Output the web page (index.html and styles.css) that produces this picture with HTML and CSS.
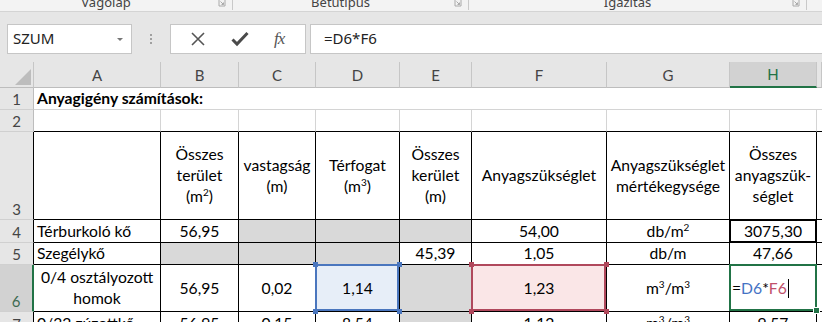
FILE: index.html
```html
<!DOCTYPE html>
<html lang="hu">
<head>
  <meta charset="UTF-8">
  <title>Anyagigény számítások</title>
  <link rel="stylesheet" href="styles.css">
</head>
<body>
  <div class="ribbon">
    <div class="group g1"><span class="glabel">Vágólap</span><span class="launch"><svg width="8" height="7" viewBox="0 0 8 7"><path d="M1 0v6h6V0" fill="none" stroke="#aaa"/><path d="M2.5 1.5l3 3M5.5 2.5v2h-2" fill="none" stroke="#aaa"/></svg></span></div>
    <div class="group g2"><span class="glabel">Betűtípus</span><span class="launch"><svg width="8" height="7" viewBox="0 0 8 7"><path d="M1 0v6h6V0" fill="none" stroke="#aaa"/><path d="M2.5 1.5l3 3M5.5 2.5v2h-2" fill="none" stroke="#aaa"/></svg></span></div>
    <div class="group g3"><span class="glabel">Igazítás</span><span class="launch"><svg width="8" height="7" viewBox="0 0 8 7"><path d="M1 0v6h6V0" fill="none" stroke="#aaa"/><path d="M2.5 1.5l3 3M5.5 2.5v2h-2" fill="none" stroke="#aaa"/></svg></span></div>
  </div>

  <div class="fbar">
    <div class="namebox">SZUM<span class="drop"></span></div>
    <div class="grip"><i></i><i></i><i></i></div>
    <div class="fbtns">
      <svg width="16" height="16" viewBox="0 0 16 16"><path d="M2 2l12 12M14 2L2 14" stroke="#555" stroke-width="1.6" fill="none"/></svg>
      <svg width="18" height="16" viewBox="0 0 18 16"><path d="M1.5 8.5l4.5 4.5L16.5 2" stroke="#4a4a4a" stroke-width="3" fill="none"/></svg>
      <span class="fx">fx</span>
    </div>
    <div class="finput">=D6*F6</div>
  </div>

  <div class="sheet">
    <!-- column headers -->
    <div class="corner"><svg width="18" height="17" viewBox="0 0 18 17"><polygon points="17,0 17,16 1,16" fill="#bdbdbd"/></svg></div>
    <div class="ch">A</div>
    <div class="ch">B</div>
    <div class="ch">C</div>
    <div class="ch">D</div>
    <div class="ch">E</div>
    <div class="ch">F</div>
    <div class="ch">G</div>
    <div class="ch sel">H</div>
    <div class="ch"></div>

    <!-- row 1 -->
    <div class="rh">1</div>
    <div class="c title">Anyagigény számítások:</div>

    <!-- row 2 -->
    <div class="rh">2</div>
    <div class="c top"></div>
    <div class="c top"></div>
    <div class="c top"></div>
    <div class="c top"></div>
    <div class="c top"></div>
    <div class="c top"></div>
    <div class="c top"></div>
    <div class="c top"></div>
    <div class="c top end"></div>

    <!-- row 3 -->
    <div class="rh tb">3</div>
    <div class="c t"></div>
    <div class="c t"><span>Összes<br>terület<br>(m<sup>2</sup>)</span></div>
    <div class="c t"><span>vastagság<br>(m)</span></div>
    <div class="c t"><span>Térfogat<br>(m<sup>3</sup>)</span></div>
    <div class="c t"><span>Összes<br>kerület<br>(m)</span></div>
    <div class="c t">Anyagszükséglet</div>
    <div class="c t"><span>Anyagszükséglet<br>mértékegysége</span></div>
    <div class="c t"><span>Összes<br>anyagszük-<br>séglet</span></div>
    <div class="c t end"></div>

    <!-- row 4 -->
    <div class="rh tb">4</div>
    <div class="c t left">Térburkoló kő</div>
    <div class="c t">56,95</div>
    <div class="c t fill"></div>
    <div class="c t fill"></div>
    <div class="c t fill"></div>
    <div class="c t">54,00</div>
    <div class="c t"><span>db/m<sup>2</sup></span></div>
    <div class="c t boxed">3075,30</div>
    <div class="c t end"></div>

    <!-- row 5 -->
    <div class="rh tb">5</div>
    <div class="c t left">Szegélykő</div>
    <div class="c t fill"></div>
    <div class="c t fill"></div>
    <div class="c t fill"></div>
    <div class="c t">45,39</div>
    <div class="c t">1,05</div>
    <div class="c t">db/m</div>
    <div class="c t">47,66</div>
    <div class="c t end"></div>

    <!-- row 6 -->
    <div class="rh tb cur">6</div>
    <div class="c t"><span>0/4 osztályozott<br>homok</span></div>
    <div class="c t">56,95</div>
    <div class="c t">0,02</div>
    <div class="c t ref blue">1,14<i class="hd tl"></i><i class="hd tr"></i><i class="hd bl"></i><i class="hd br"></i></div>
    <div class="c t fill"></div>
    <div class="c t ref red">1,23<i class="hd tl"></i><i class="hd tr"></i><i class="hd bl"></i><i class="hd br"></i></div>
    <div class="c t"><span>m<sup>3</sup>/m<sup>3</sup></span></div>
    <div class="c t active">=<span class="rb">D6</span>*<span class="rr">F6</span><span class="caret"></span><i class="hd br"></i></div>
    <div class="c t end"></div>

    <!-- row 7 -->
    <div class="rh tb">7</div>
    <div class="c t left">0/32 zúzottkő</div>
    <div class="c t">56,95</div>
    <div class="c t">0,15</div>
    <div class="c t">8,54</div>
    <div class="c t fill"></div>
    <div class="c t">1,12</div>
    <div class="c t"><span>m<sup>3</sup>/m<sup>3</sup></span></div>
    <div class="c t">9,57</div>
    <div class="c t end"></div>
  </div>
</body>
</html>
```

FILE: styles.css
```css
body {
  margin: 0;
  width: 822px;
  height: 322px;
  overflow: hidden;
  background-color: #e6e6e6;
  font-family: Lato, "Liberation Sans", sans-serif;
}

/* ribbon group labels, cut off at the top */
.ribbon {
  display: flex;
  height: 11px;
  background-color: #f3f3f3;
  border-bottom: 1px solid #d4d4d4;
  overflow: hidden;
}
.group {
  display: flex;
  height: 10px;
  border-right: 1px solid #c9c9c9;
}
.g1 { width: 232px; }
.g2 { width: 235px; }
.g3 { width: 337px; }
.glabel {
  flex: 1;
  text-align: center;
  font-family: "Noto Sans", sans-serif;
  font-size: 13px;
  line-height: 13px;
  margin-top: -4px;
  color: #444;
}
.launch {
  width: 20px;
  display: flex;
  justify-content: center;
}

/* formula bar */
.fbar {
  display: flex;
  height: 50px;
  padding-top: 12px;
  box-sizing: border-box;
  font-family: "Noto Sans", sans-serif;
}
.namebox {
  position: relative;
  margin-left: 7px;
  width: 125px;
  height: 30px;
  box-sizing: border-box;
  background: #fff;
  border: 1px solid #c6c6c6;
  font-size: 15px;
  line-height: 27px;
  padding-left: 5px;
  color: #222;
}
.drop {
  position: absolute;
  right: 8px;
  top: 13px;
  border-left: 3px solid transparent;
  border-right: 3px solid transparent;
  border-top: 3px solid #777;
}
.grip {
  width: 38px;
  display: flex;
  flex-direction: column;
  align-items: center;
  justify-content: center;
  gap: 2px;
  height: 30px;
}
.grip i {
  width: 2px;
  height: 2px;
  background: #a0a0a0;
}
.fbtns {
  width: 136px;
  height: 30px;
  box-sizing: border-box;
  background: #fff;
  border: 1px solid #c6c6c6;
  display: flex;
  align-items: center;
  justify-content: space-around;
  padding: 0 8px 0 6px;
}
.fx {
  font-family: "Liberation Serif", serif;
  font-style: italic;
  font-size: 17px;
  color: #555;
  letter-spacing: -1px;
}
.finput {
  flex: 1;
  margin-left: 4px;
  height: 30px;
  box-sizing: border-box;
  background: #fff;
  border: 1px solid #c6c6c6;
  border-right: none;
  font-size: 15px;
  line-height: 27px;
  padding-left: 13px;
  color: #222;
}

/* sheet */
.sheet {
  display: grid;
  grid-template-columns: 34px 127px 78px 77px 84px 72px 135px 123px 87px 5px;
  grid-template-rows: 26px 22px 22px 88px 23px 22px 47px 23px;
  background: #fff;
  font-size: 15.7px;
}
.corner, .ch, .rh {
  background: #e6e6e6;
  color: #444;
  font-size: 15px;
  box-sizing: border-box;
}
.corner {
  display: flex;
  align-items: flex-end;
  justify-content: flex-end;
  border-right: 1px solid #c6c6c6;
  border-bottom: 1px solid #bdbdbd;
  padding: 0 1px 1px 0;
}
.ch {
  display: flex;
  align-items: center;
  justify-content: center;
  border-right: 1px solid #c6c6c6;
  border-bottom: 1px solid #bdbdbd;
}
.ch.sel {
  background: #d2d2d2;
  color: #217346;
  border-bottom: 2px solid #217346;
}
.rh {
  display: flex;
  align-items: flex-end;
  justify-content: center;
  line-height: 20px;
  border-right: 1px solid #bdbdbd;
  border-bottom: 1px solid #d0d0d0;
}
.rh.tb { border-right-color: #000; }
.rh.cur {
  background: #d2d2d2;
  color: #3d6b52;
  border-right: 2px solid #217346;
}

.c {
  display: flex;
  align-items: center;
  justify-content: center;
  text-align: center;
  box-sizing: border-box;
  border-right: 1px solid #d4d4d4;
  border-bottom: 1px solid #d4d4d4;
  line-height: 21px;
  padding: 0 2px;
  white-space: nowrap;
  color: #000;
}
.c sup {
  font-size: 10px;
  line-height: 0;
  vertical-align: 6px;
}
.title {
  grid-column: 2 / -1;
  justify-content: flex-start;
  align-items: flex-end;
  font-weight: bold;
  padding-left: 3px;
  border-right: none;
}
.top { border-bottom-color: #000; }
.t {
  border-right-color: #000;
  border-bottom-color: #000;
}
.end { border-right: none; }
.left {
  justify-content: flex-start;
  padding-left: 3px;
}
.fill { background: #d9d9d9; }
.boxed {
  position: relative;
}
.boxed::after {
  content: "";
  position: absolute;
  left: -1px;
  top: -1px;
  right: -1px;
  bottom: -1px;
  border: 2px solid #000;
}

/* formula references */
.ref, .active {
  position: relative;
}
.ref::after, .active::after {
  content: "";
  position: absolute;
  left: -1px;
  top: -1px;
  right: 0;
  bottom: 0;
  border: 2px solid;
}
.blue { background: #e7eef8; }
.blue::after { border-color: #4a76be; }
.blue .hd { background: #4a76be; }
.red { background: #fae6e7; }
.red::after { border-color: #b0485c; }
.red .hd { background: #b0485c; }
.hd {
  position: absolute;
  width: 5px;
  height: 5px;
  z-index: 1;
}
.tl { left: -3px; top: -3px; }
.tr { right: -3px; top: -3px; }
.bl { left: -3px; bottom: -3px; }
.br { right: -3px; bottom: -3px; }

.active {
  justify-content: flex-start;
  padding-left: 2px;
}
.active::after {
  border-color: #217346;
  right: -1px;
}
.active .hd {
  background: #217346;
  right: -4px;
  border: 1px solid #fff;
}
.rb { color: #4472c4; }
.rr { color: #c0506a; }
.caret {
  width: 1px;
  height: 19px;
  background: #000;
  margin-left: 1px;
}
```
